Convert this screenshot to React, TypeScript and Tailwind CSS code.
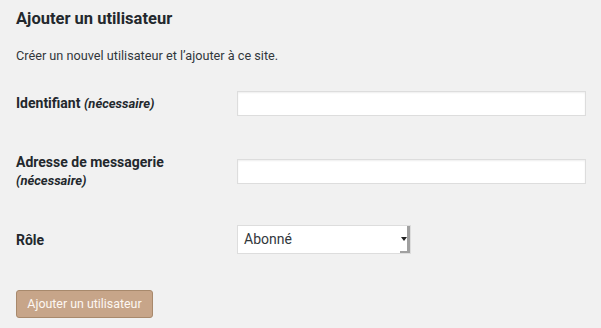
import React from "react";

export default function App() {
  return (
    <div className="w-[601px] h-[328px] bg-[#f1f1f1] text-[#23282d] overflow-hidden" style={{ fontFamily: "Roboto, 'Noto Sans', sans-serif" }}>
      <div className="pl-[16px] pr-[15px] pt-[4px]">
        <h1 className="text-[16.5px] font-bold leading-[24px] mt-[3px]">Ajouter un utilisateur</h1>
        <p className="text-[12.7px] leading-[18px] mt-[16px] text-[#32373c]">Créer un nouvel utilisateur et l’ajouter à ce site.</p>
        <div className="mt-[26px] flex items-center h-[25px]">
          <label className="w-[221px] text-[14px] font-bold leading-[18px]">
            Identifiant <span className="italic text-[13px]">(nécessaire)</span>
          </label>
          <input className="flex-1 h-[25px] bg-white border border-[#ddd] shadow-[inset_0_1px_2px_rgba(0,0,0,0.07)] outline-none" />
        </div>
        <div className="mt-[43px] flex items-start h-[40px]">
          <label className="w-[221px] text-[14px] font-bold leading-[18px] -mt-[6px]">
            Adresse de messagerie
            <br />
            <span className="italic text-[13px] leading-[20px]">(nécessaire)</span>
          </label>
          <input className="flex-1 h-[25px] bg-white border border-[#ddd] shadow-[inset_0_1px_2px_rgba(0,0,0,0.07)] outline-none" />
        </div>
        <div className="mt-[26px] flex items-center h-[29px]">
          <label className="w-[221px] text-[14px] font-bold leading-[18px]">Rôle</label>
          <div className="w-[174px] h-[29px] bg-white border border-[#ddd] flex items-center justify-between">
            <span className="pl-[6px] text-[14px] text-[#32373c]">Abonné</span>
            <div className="w-[10px] h-full flex items-center justify-center border-r-[3px] border-b-[2px] border-[#a0a0a0] bg-white">
              <svg width="6" height="4" viewBox="0 0 6 4"><path d="M0 0 L6 0 L3 4 Z" fill="#222" /></svg>
            </div>
          </div>
        </div>
        <div className="mt-[36px]">
          <button className="w-[137px] h-[28px] bg-[#c7a589] border border-[#a8896c] rounded-[3px] text-[12.4px] text-[#fdf7f2] leading-[26px] text-center">
            Ajouter un utilisateur
          </button>
        </div>
      </div>
    </div>
  );
}
